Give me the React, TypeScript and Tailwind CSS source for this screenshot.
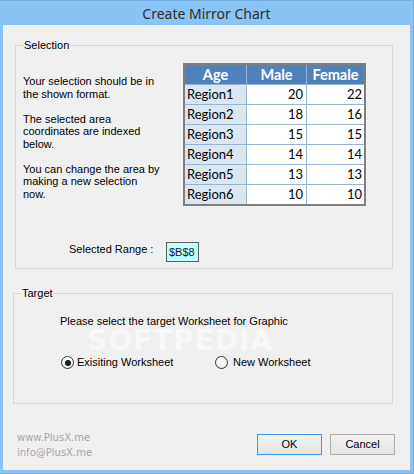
import React from "react";

const rows: [string, number, number][] = [
  ["Region1", 20, 22],
  ["Region2", 18, 16],
  ["Region3", 15, 15],
  ["Region4", 14, 14],
  ["Region5", 13, 13],
  ["Region6", 10, 10],
];

function Radio({ checked }: { checked?: boolean }) {
  return (
    <span className="w-[13px] h-[13px] rounded-full border border-[#333333] bg-gradient-to-b from-[#ffffff] to-[#ececec] flex items-center justify-center shrink-0">
      {checked && <span className="w-[6px] h-[6px] rounded-full bg-[#1a1a1a]" />}
    </span>
  );
}

export default function App() {
  return (
    <div className="w-[414px] h-[474px] bg-[#8ac4f5] border-t border-r border-b border-[#74aee4] flex flex-col overflow-hidden font-['Liberation_Sans',Arial,sans-serif] text-black">
      {/* Title bar */}
      <div className="h-[24px] flex items-center justify-center">
        <span className="font-['Noto_Sans',sans-serif] text-[14px] leading-[18px] text-[#2e2e2e] mt-[1px]">
          Create Mirror Chart
        </span>
      </div>

      {/* Client area */}
      <div className="ml-[3px] w-[407px] h-[445px] bg-[#f0f0f0] flex flex-col relative">
        {/* Selection group */}
        <div className="mt-[20px] ml-[12px] w-[378px] h-[224px] border border-[#d7d7d7] relative">
          <span className="absolute left-[7px] -top-[7px] px-[1px] bg-[#f0f0f0] text-[11px] leading-[13px]">
            Selection
          </span>
          <div className="flex items-start pl-[7px] pt-[17px]">
            <div className="w-[160px] mt-[12px] text-[11px] leading-[12.5px]">
              <p className="mb-[12.5px]">
                Your selection should be in
                <br />
                the shown format.
              </p>
              <p className="mb-[12.5px]">
                The selected area
                <br />
                coordinates are indexed
                <br />
                below.
              </p>
              <p>
                You can change the area by
                <br />
                making a new selection
                <br />
                now.
              </p>
            </div>
            <div className="w-[183px] border-2 border-[#7f7f7f] font-['Lato',sans-serif] text-[13px]">
              <div className="flex h-[19px] bg-[#4f81bd] text-white font-bold text-[14.5px] leading-[19px]">
                <div className="w-[62px] text-center border-r border-[#95b3d7]">Age</div>
                <div className="w-[60px] text-center border-r border-[#95b3d7]">Male</div>
                <div className="w-[57px] text-center">Female</div>
              </div>
              {rows.map(([r, m, f]) => (
                <div key={r} className="flex h-[20px] leading-[19px] border-t border-[#95b3d7]">
                  <div className="w-[62px] bg-[#dce6f1] pl-[2px] border-r border-[#95b3d7]">{r}</div>
                  <div className="w-[60px] bg-white text-right pr-[3px] border-r border-[#95b3d7]">{m}</div>
                  <div className="w-[57px] bg-white text-right pr-[2px]">{f}</div>
                </div>
              ))}
            </div>
          </div>
          <div className="flex items-start pl-[53px] mt-[36px]">
            <div className="w-[97px] text-[11px] leading-[13px] mt-[1px]">Selected Range :</div>
            <div className="w-[33px] h-[20px] border border-[#5f5f5f] bg-[#c0ffff] text-[11px] leading-[18px] pl-[2px] text-[#1a1a1a]">
              $B$8
            </div>
          </div>
        </div>

        {/* Target group */}
        <div className="mt-[24px] ml-[10px] w-[380px] h-[111px] border border-[#d7d7d7] relative">
          <span className="absolute left-[7px] -top-[7px] px-[1px] bg-[#f0f0f0] text-[11px] leading-[13px]">
            Target
          </span>
          <div className="pl-[46px] pt-[21px] text-[11px] leading-[13px]">
            Please select the target Worksheet for Graphic
          </div>
          <div className="flex items-center pl-[47px] mt-[28px] text-[11px] leading-[13px]">
            <div className="w-[154px] flex items-center">
              <Radio checked />
              <span className="ml-[3px]">Exisiting Worksheet</span>
            </div>
            <div className="flex items-center">
              <Radio />
              <span className="ml-[5px]">New Worksheet</span>
            </div>
          </div>
        </div>

        {/* Watermark */}
        <div className="absolute left-[84px] top-[306px] font-['DejaVu_Sans',sans-serif] font-bold text-[28px] leading-[20px] tracking-[1px] text-white/60 pointer-events-none select-none">
          SOFTPEDIA
        </div>

        {/* Bottom row */}
        <div className="flex justify-between items-start pl-[14px] pr-[15px] mt-[26px]">
          <div className="font-['DejaVu_Sans',sans-serif] text-[10px] leading-[15px] text-[#a6a2ad]">
            <div>www.PlusX.me</div>
            <div>info@PlusX.me</div>
          </div>
          <div className="flex gap-[8px] mt-[4px]">
            <button className="w-[65px] h-[21px] border border-[#3c99f0] bg-gradient-to-b from-[#f2f2f2] to-[#e4e4e4] text-[11px] leading-[19px] text-black">
              OK
            </button>
            <button className="w-[65px] h-[21px] border border-[#adadad] bg-gradient-to-b from-[#f2f2f2] to-[#e4e4e4] text-[11px] leading-[19px] text-black">
              Cancel
            </button>
          </div>
        </div>
      </div>
    </div>
  );
}
